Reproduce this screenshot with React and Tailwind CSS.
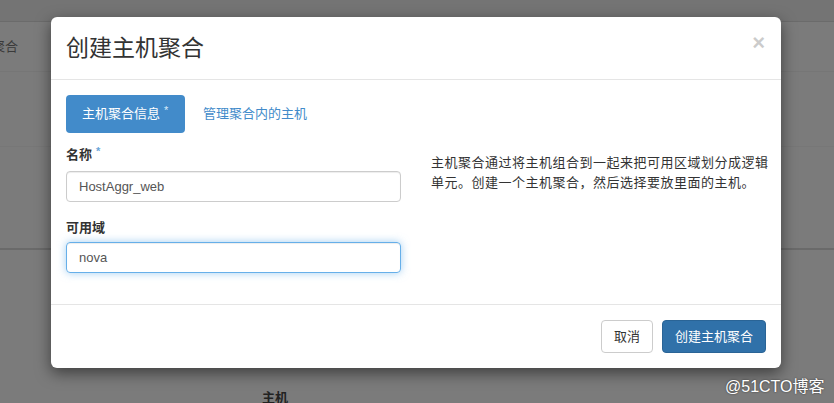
export default function App(){
  const font = { fontFamily: '"Liberation Sans", "Noto Sans CJK SC", sans-serif' }
  return (
    <div className="relative h-[403px] w-[834px] overflow-hidden bg-[#7b7b7b]" style={font}>
      {/* dimmed page behind */}
      <div className="h-[22px] bg-[#747474] border-b border-[#6b6b6b]"></div>
      <div className="h-[50px] border-b border-[#767676] flex items-center">
        <span className="-ml-[8px] text-[13px] text-[#3a3a3a]">聚合</span>
      </div>
      <div className="h-[75px] border-b border-[#777777]"></div>
      <div className="h-[103px] border-b-2 border-[#6a6a6a]"></div>
      <div className="pt-[138px] pl-[262px] text-[13px] font-bold text-[#222]">主机</div>

      {/* modal */}
      <div className="absolute left-[51px] top-[17px] w-[730px] rounded-[6px] bg-white shadow-[0_5px_15px_rgba(0,0,0,0.5)]">
        <div className="flex items-start justify-between border-b border-[#e5e5e5] px-[15px] pt-[14px] pb-[14px]">
          <h4 className="text-[23px] leading-[34px] text-[#333]">创建主机聚合</h4>
          <button className="mt-[1px] mr-[1px] text-[22px] font-bold leading-[22px] text-black opacity-20">×</button>
        </div>
        <div className="px-[15px] pt-[15px] pb-[31px]">
          <div className="flex items-center">
            <div className="flex h-[38px] w-[119px] items-center rounded-[4px] bg-[#428bca] pl-[16px] text-[13px] text-white">
              主机聚合信息<span className="ml-[4px] -mt-[8px] text-[11px] text-[#d9ecfb]">*</span>
            </div>
            <div className="ml-[18px] text-[13px] text-[#428bca]">管理聚合内的主机</div>
          </div>
          <div className="mt-[10px] grid grid-cols-2 gap-[30px]">
            <div>
              <label className="flex h-[25px] items-start pt-[2px] text-[13px] font-bold text-[#333]">
                名称<span className="ml-[4px] -mt-[2px] text-[11px] text-[#6aa5d8]">*</span>
              </label>
              <div className="mt-[3px] flex h-[31px] items-center rounded-[4px] border border-[#ccc] px-[12px] text-[13px] text-[#555] shadow-[inset_0_1px_1px_rgba(0,0,0,0.075)]">HostAggr_web</div>
              <label className="mt-[14px] flex h-[25px] items-start pt-[2px] text-[13px] font-bold text-[#333]">可用域</label>
              <div className="mt-[1px] flex h-[31px] items-center rounded-[4px] border border-[#66afe9] px-[12px] text-[13px] text-[#555] shadow-[inset_0_1px_1px_rgba(0,0,0,0.075),0_0_8px_rgba(102,175,233,0.6)]">nova</div>
            </div>
            <div className="whitespace-nowrap pt-[10px] text-[13px] leading-[20px] tracking-[0.5px] text-[#333]">
              主机聚合通过将主机组合到一起来把可用区域划分成逻辑<br />单元。创建一个主机聚合，然后选择要放里面的主机。
            </div>
          </div>
        </div>
        <div className="flex justify-end gap-[9px] border-t border-[#e5e5e5] p-[15px]">
          <button className="h-[33px] rounded-[4px] border border-[#ccc] bg-white px-[12px] text-[13px] text-[#333]">取消</button>
          <button className="h-[33px] rounded-[4px] border border-[#2a6496] bg-[#3071a9] px-[12px] text-[13px] text-white">创建主机聚合</button>
        </div>
      </div>

      <div className="absolute left-[725px] top-[375px] text-[16px] text-white [text-shadow:0_0_2px_rgba(0,0,0,0.6)]">@51CTO博客</div>
    </div>
  )
}
